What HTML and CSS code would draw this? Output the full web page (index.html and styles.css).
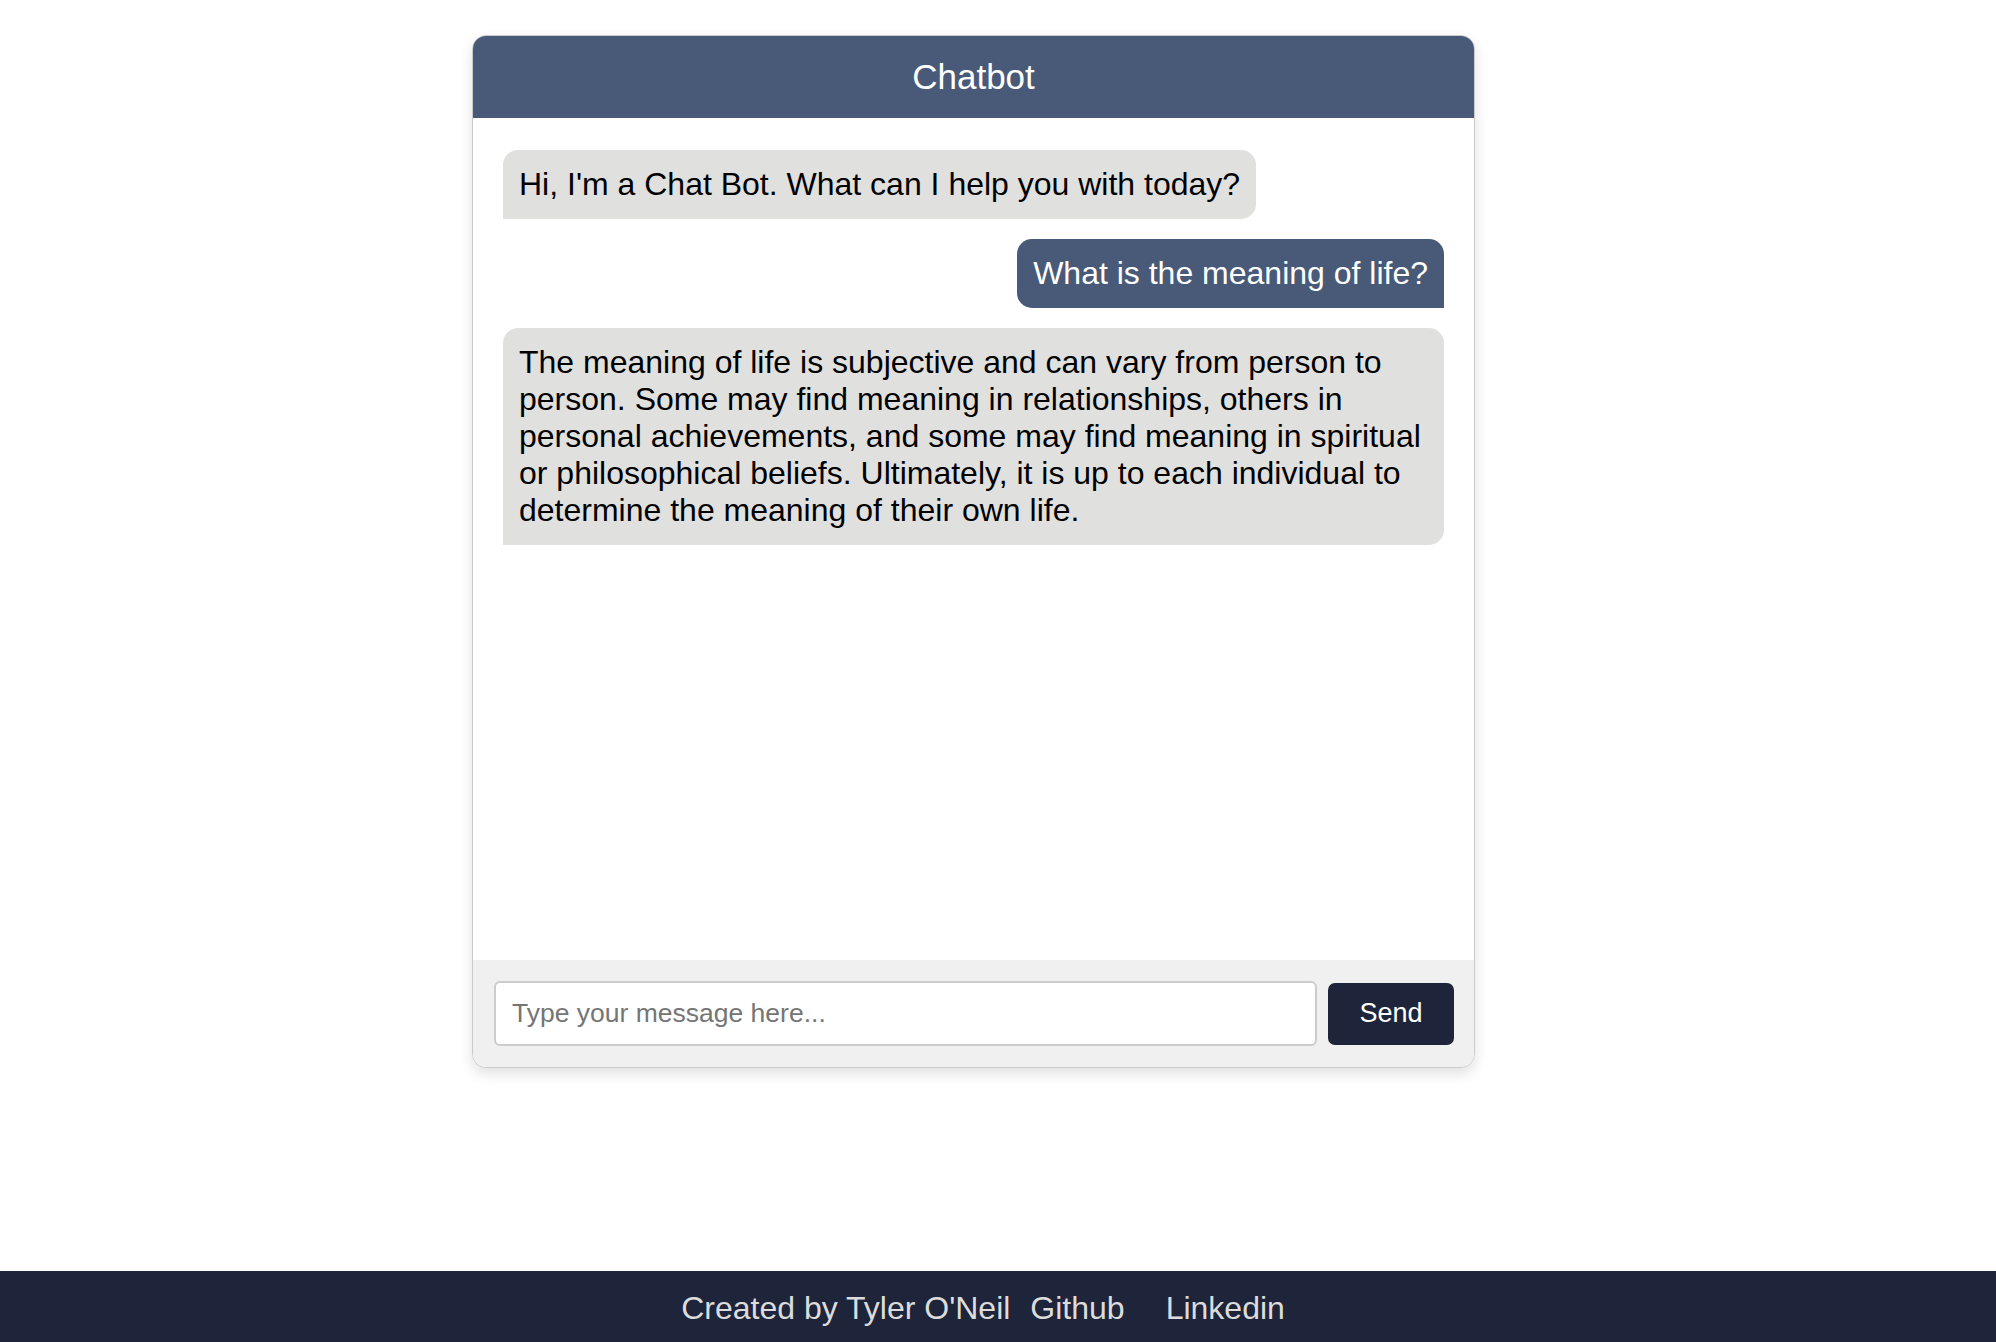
FILE: index.html
```html
<!DOCTYPE html>
<html lang="en">
<head>
<meta charset="utf-8">
<title>Chatbot</title>
<link rel="stylesheet" href="styles.css">
</head>
<body>
<main class="page">
  <section class="chat">
    <header class="chat-header">Chatbot</header>
    <div class="messages">
      <div class="msg bot">Hi, I'm a Chat Bot. What can I help you with today?</div>
      <div class="msg user">What is the meaning of life?</div>
      <div class="msg bot">The meaning of life is subjective and can vary from person to person. Some may find meaning in relationships, others in personal achievements, and some may find meaning in spiritual or philosophical beliefs. Ultimately, it is up to each individual to determine the meaning of their own life.</div>
    </div>
    <form class="composer">
      <input class="composer-input" type="text" placeholder="Type your message here...">
      <button class="composer-send" type="button">Send</button>
    </form>
  </section>
</main>
<footer class="footer">
  <span class="footer-credit">Created by Tyler O'Neil</span>
  <a class="footer-link github" href="#">Github</a>
  <a class="footer-link linkedin" href="#">Linkedin</a>
</footer>
</body>
</html>
```

FILE: styles.css
```css
* { box-sizing: border-box; }

html, body {
  margin: 0;
  padding: 0;
}

body {
  min-height: 100vh;
  display: flex;
  flex-direction: column;
  background: #ffffff;
  font-family: "Liberation Sans", Arial, sans-serif;
  color: #000;
}

.page {
  flex: 1;
  padding-top: 35px;
  padding-right: 49px;
  display: flex;
  justify-content: center;
  align-items: flex-start;
}

.chat {
  width: 1003px;
  display: flex;
  flex-direction: column;
  border: 1px solid #cbcbcb;
  border-radius: 14px;
  overflow: hidden;
  box-shadow: 0 6px 14px rgba(0, 0, 0, 0.12);
  background: #fff;
}

.chat-header {
  height: 82px;
  background: #485a77;
  color: #fff;
  font-size: 35px;
  display: flex;
  align-items: center;
  justify-content: center;
}

.messages {
  height: 842px;
  padding: 32px 30px;
  display: flex;
  flex-direction: column;
  align-items: flex-start;
  gap: 20px;
  background: #fff;
}

.msg {
  font-size: 32px;
  line-height: 37px;
  padding: 16px 16px;
  border-radius: 15px;
  max-width: 100%;
}

.msg.bot {
  background: #e0e0df;
  color: #000;
  border-bottom-left-radius: 0;
}

.msg.user {
  align-self: flex-end;
  background: #485a77;
  color: #fff;
  border-bottom-right-radius: 0;
}

.composer {
  margin: 0;
  height: 107px;
  background: #f0f0f0;
  padding: 0 20px 0 21px;
  display: flex;
  align-items: center;
  gap: 11px;
}

.composer-input {
  flex: 1;
  height: 65px;
  border: 2px solid #cccccc;
  border-radius: 6px;
  padding: 0 16px;
  font-family: "Liberation Sans", Arial, sans-serif;
  font-size: 26.5px;
  color: #333;
  background: #fff;
  outline: none;
}

.composer-input::placeholder {
  color: #757575;
}

.composer-send {
  width: 126px;
  height: 62px;
  border: none;
  border-radius: 7px;
  background: #1e253b;
  color: #fff;
  font-family: "Liberation Sans", Arial, sans-serif;
  font-size: 27px;
  cursor: pointer;
}

.footer {
  height: 71px;
  padding-top: 4px;
  background: #1e243a;
  color: #dcdcdc;
  display: flex;
  align-items: center;
  justify-content: center;
  font-size: 32px;
}

.footer-link {
  color: #dcdcdc;
  text-decoration: none;
}

.footer-link.github {
  margin-left: 20px;
}

.footer-link.linkedin {
  margin-left: 41px;
  margin-right: 30px;
}
```
